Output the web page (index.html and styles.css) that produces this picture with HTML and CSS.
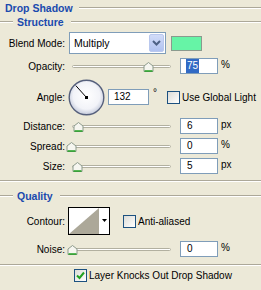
FILE: index.html
```html
<!DOCTYPE html>
<html lang="en">
<head>
    <meta charset="UTF-8">
    <title>Drop Shadow</title>
    <link rel="stylesheet" href="styles.css">
</head>
<body>
    <div class="panel">
        <div class="title-row">
            <span class="title">Drop Shadow</span>
            <span class="rule"></span>
        </div>

        <div class="group-head">
            <span class="rule lead"></span>
            <span class="legend">Structure</span>
            <span class="rule"></span>
        </div>

        <div class="row blend">
            <span class="label">Blend Mode:</span>
            <div class="select">
                <span class="select-text">Multiply</span>
                <div class="drop-btn">
                    <svg width="9" height="6" viewBox="0 0 9 6"><path d="M1 1 L4.5 4.5 L8 1" fill="none" stroke="#4d6185" stroke-width="2"/></svg>
                </div>
            </div>
            <div class="swatch"></div>
        </div>

        <div class="row opacity">
            <span class="label">Opacity:</span>
            <div class="slider">
                <div class="track"></div>
                <svg class="thumb" style="left: 74px" width="11" height="10" viewBox="0 0 11 10"><path d="M5.5 0.5 L10 4 V9.5 H1 V4 Z" fill="#f6f6f0" stroke="#8c9a8c"/><path d="M1.5 9 H9.5" stroke="#21a121" stroke-width="1.5"/></svg>
            </div>
            <div class="field"><span class="sel">75</span></div>
            <span class="unit">%</span>
        </div>

        <div class="row angle">
            <span class="label">Angle:</span>
            <svg class="dial" width="37" height="37" viewBox="0 0 37 37">
                <defs>
                    <radialGradient id="dialFill" cx="50%" cy="45%" r="55%">
                        <stop offset="0%" stop-color="#ffffff"/>
                        <stop offset="70%" stop-color="#f2f3f8"/>
                        <stop offset="100%" stop-color="#c4cadb"/>
                    </radialGradient>
                </defs>
                <circle cx="18.5" cy="18.5" r="17.3" fill="url(#dialFill)" stroke="#56607c" stroke-width="1.4"/>
                <line x1="18.5" y1="18.5" x2="7.8" y2="6.6" stroke="#000" stroke-width="1"/>
                <rect x="17" y="17" width="3" height="3" fill="#000"/>
            </svg>
            <div class="field wide">132</div>
            <span class="deg">°</span>
            <div class="check global"></div>
            <span class="check-label">Use Global Light</span>
        </div>

        <div class="row distance">
            <span class="label">Distance:</span>
            <div class="slider">
                <div class="track"></div>
                <svg class="thumb" style="left: 4px" width="11" height="10" viewBox="0 0 11 10"><path d="M5.5 0.5 L10 4 V9.5 H1 V4 Z" fill="#f6f6f0" stroke="#8c9a8c"/><path d="M1.5 9 H9.5" stroke="#21a121" stroke-width="1.5"/></svg>
            </div>
            <div class="field">6</div>
            <span class="unit">px</span>
        </div>

        <div class="row spread">
            <span class="label">Spread:</span>
            <div class="slider">
                <div class="track"></div>
                <svg class="thumb" style="left: -3px" width="11" height="10" viewBox="0 0 11 10"><path d="M5.5 0.5 L10 4 V9.5 H1 V4 Z" fill="#f6f6f0" stroke="#8c9a8c"/><path d="M1.5 9 H9.5" stroke="#21a121" stroke-width="1.5"/></svg>
            </div>
            <div class="field">0</div>
            <span class="unit">%</span>
        </div>

        <div class="row size">
            <span class="label">Size:</span>
            <div class="slider">
                <div class="track"></div>
                <svg class="thumb" style="left: 3px" width="11" height="10" viewBox="0 0 11 10"><path d="M5.5 0.5 L10 4 V9.5 H1 V4 Z" fill="#f6f6f0" stroke="#8c9a8c"/><path d="M1.5 9 H9.5" stroke="#21a121" stroke-width="1.5"/></svg>
            </div>
            <div class="field">5</div>
            <span class="unit">px</span>
        </div>

        <div class="rule group-end"></div>

        <div class="group-head quality">
            <span class="rule lead"></span>
            <span class="legend">Quality</span>
            <span class="rule"></span>
        </div>

        <div class="row contour">
            <span class="label">Contour:</span>
            <div class="contour-box">
                <svg class="curve" width="30" height="26" viewBox="0 0 30 26"><polygon points="0,26 30,0 30,26" fill="#aca899"/></svg>
                <div class="contour-drop">
                    <svg width="5" height="3" viewBox="0 0 5 3"><polygon points="0,0 5,0 2.5,3" fill="#000"/></svg>
                </div>
            </div>
            <div class="check aa"></div>
            <span class="check-label">Anti-aliased</span>
        </div>

        <div class="row noise">
            <span class="label">Noise:</span>
            <div class="slider">
                <div class="track"></div>
                <svg class="thumb" style="left: -2px" width="11" height="10" viewBox="0 0 11 10"><path d="M5.5 0.5 L10 4 V9.5 H1 V4 Z" fill="#f6f6f0" stroke="#8c9a8c"/><path d="M1.5 9 H9.5" stroke="#21a121" stroke-width="1.5"/></svg>
            </div>
            <div class="field">0</div>
            <span class="unit">%</span>
        </div>

        <div class="rule separator"></div>

        <div class="row knock">
            <div class="check checked">
                <svg width="11" height="11" viewBox="0 0 11 11"><path d="M2 5.5 L4.5 8 L9 2.5" fill="none" stroke="#21a121" stroke-width="2"/></svg>
            </div>
            <span class="check-label">Layer Knocks Out Drop Shadow</span>
        </div>
    </div>
</body>
</html>
```

FILE: styles.css
```css
body {
    margin: 0;
    background-color: #ece9d8;
    font-family: "Liberation Sans", Arial, sans-serif;
    font-size: 10px;
    color: #000;
}

.panel {
    width: 261px;
    height: 290px;
    overflow: hidden;
}

.rule {
    flex: 1;
    height: 0;
    border-top: 1px solid #aca899;
    border-bottom: 1px solid #fff;
}

.title-row {
    display: flex;
    align-items: center;
    height: 16px;
    padding-left: 5px;
}

.title {
    font-size: 10.5px;
    font-weight: bold;
    color: #1a4aae;
    padding-right: 6px;
}

.group-head {
    display: flex;
    align-items: center;
    height: 12px;
}

.rule.lead {
    flex: none;
    width: 13px;
}

.legend {
    font-size: 10.5px;
    font-weight: bold;
    color: #1a4aae;
    padding: 0 7px 0 4px;
}

.row {
    display: flex;
    align-items: center;
}

.label {
    flex: none;
    width: 65px;
    text-align: right;
}

.blend {
    margin-top: 4px;
    height: 22px;
}

.select {
    display: flex;
    align-items: center;
    box-sizing: border-box;
    width: 97px;
    height: 22px;
    margin-left: 4px;
    padding: 1px;
    background-color: #fff;
    border: 1px solid #7f9db9;
}

.select-text {
    flex: 1;
    padding-left: 3px;
    font-size: 10.5px;
}

.drop-btn {
    display: flex;
    align-items: center;
    justify-content: center;
    width: 15px;
    height: 18px;
    border-radius: 2px;
    border: 1px solid #b9c8ee;
    box-sizing: border-box;
    background: linear-gradient(#d2dcf8, #b0c2f0);
}

.swatch {
    width: 31px;
    height: 15px;
    box-sizing: border-box;
    margin-left: 5px;
    background-color: #66f4a6;
    border: 1px solid #8a9a8e;
}

.opacity {
    margin-top: 4px;
    height: 16px;
}

.slider {
    position: relative;
    align-self: stretch;
    box-sizing: border-box;
    width: 105px;
    margin-left: 4px;
    padding: 7px 3px 0;
}

.track {
    height: 1px;
    border: 1px solid #b2b0a0;
    border-radius: 2px;
    background-color: #fff;
}

.thumb {
    position: absolute;
    top: 4px;
}

.field {
    box-sizing: border-box;
    width: 38px;
    height: 16px;
    margin-left: 6px;
    padding-left: 6px;
    line-height: 14px;
    background-color: #fff;
    border: 1px solid #7f9db9;
}

.sel {
    display: inline-block;
    padding: 0 1px;
    margin-left: -1px;
    background-color: #316ac5;
    color: #fff;
}

.unit {
    align-self: flex-start;
    margin-left: 3px;
    margin-top: 1px;
}

.angle {
    margin-top: 5px;
    height: 36px;
}

.dial {
    margin-left: 3px;
}

.field.wide {
    width: 41px;
    margin-left: 3px;
    padding-left: 5px;
}

.deg {
    align-self: flex-start;
    margin: 8px 0 0 4px;
}

.check {
    flex: none;
    box-sizing: border-box;
    width: 13px;
    height: 13px;
    border: 1px solid #1c5180;
    background: linear-gradient(135deg, #dcdcd7, #fff);
}

.check.global {
    margin-left: 10px;
}

.check-label {
    margin-left: 2px;
}

.distance {
    margin-top: 3px;
    height: 16px;
}

.spread,
.size {
    margin-top: 4px;
    height: 16px;
}

.group-end {
    flex: none;
    margin-top: 6px;
}

.quality {
    margin-top: 8px;
}

.contour {
    margin-top: 5px;
    height: 28px;
}

.contour-box {
    display: flex;
    box-sizing: border-box;
    width: 42px;
    height: 28px;
    margin-left: 3px;
    border: 1px solid #000;
    background-color: #fff;
}

.curve {
    display: block;
}

.contour-drop {
    display: flex;
    justify-content: center;
    padding-top: 11px;
    flex: 1;
}

.check.aa {
    margin-left: 13px;
}

.noise {
    margin-top: 6px;
    height: 16px;
}

.separator {
    flex: none;
    margin-top: 7px;
}

.knock {
    margin-top: 3px;
    height: 13px;
    padding-left: 74px;
}

.check.checked {
    display: flex;
    align-items: center;
    justify-content: center;
}
```
